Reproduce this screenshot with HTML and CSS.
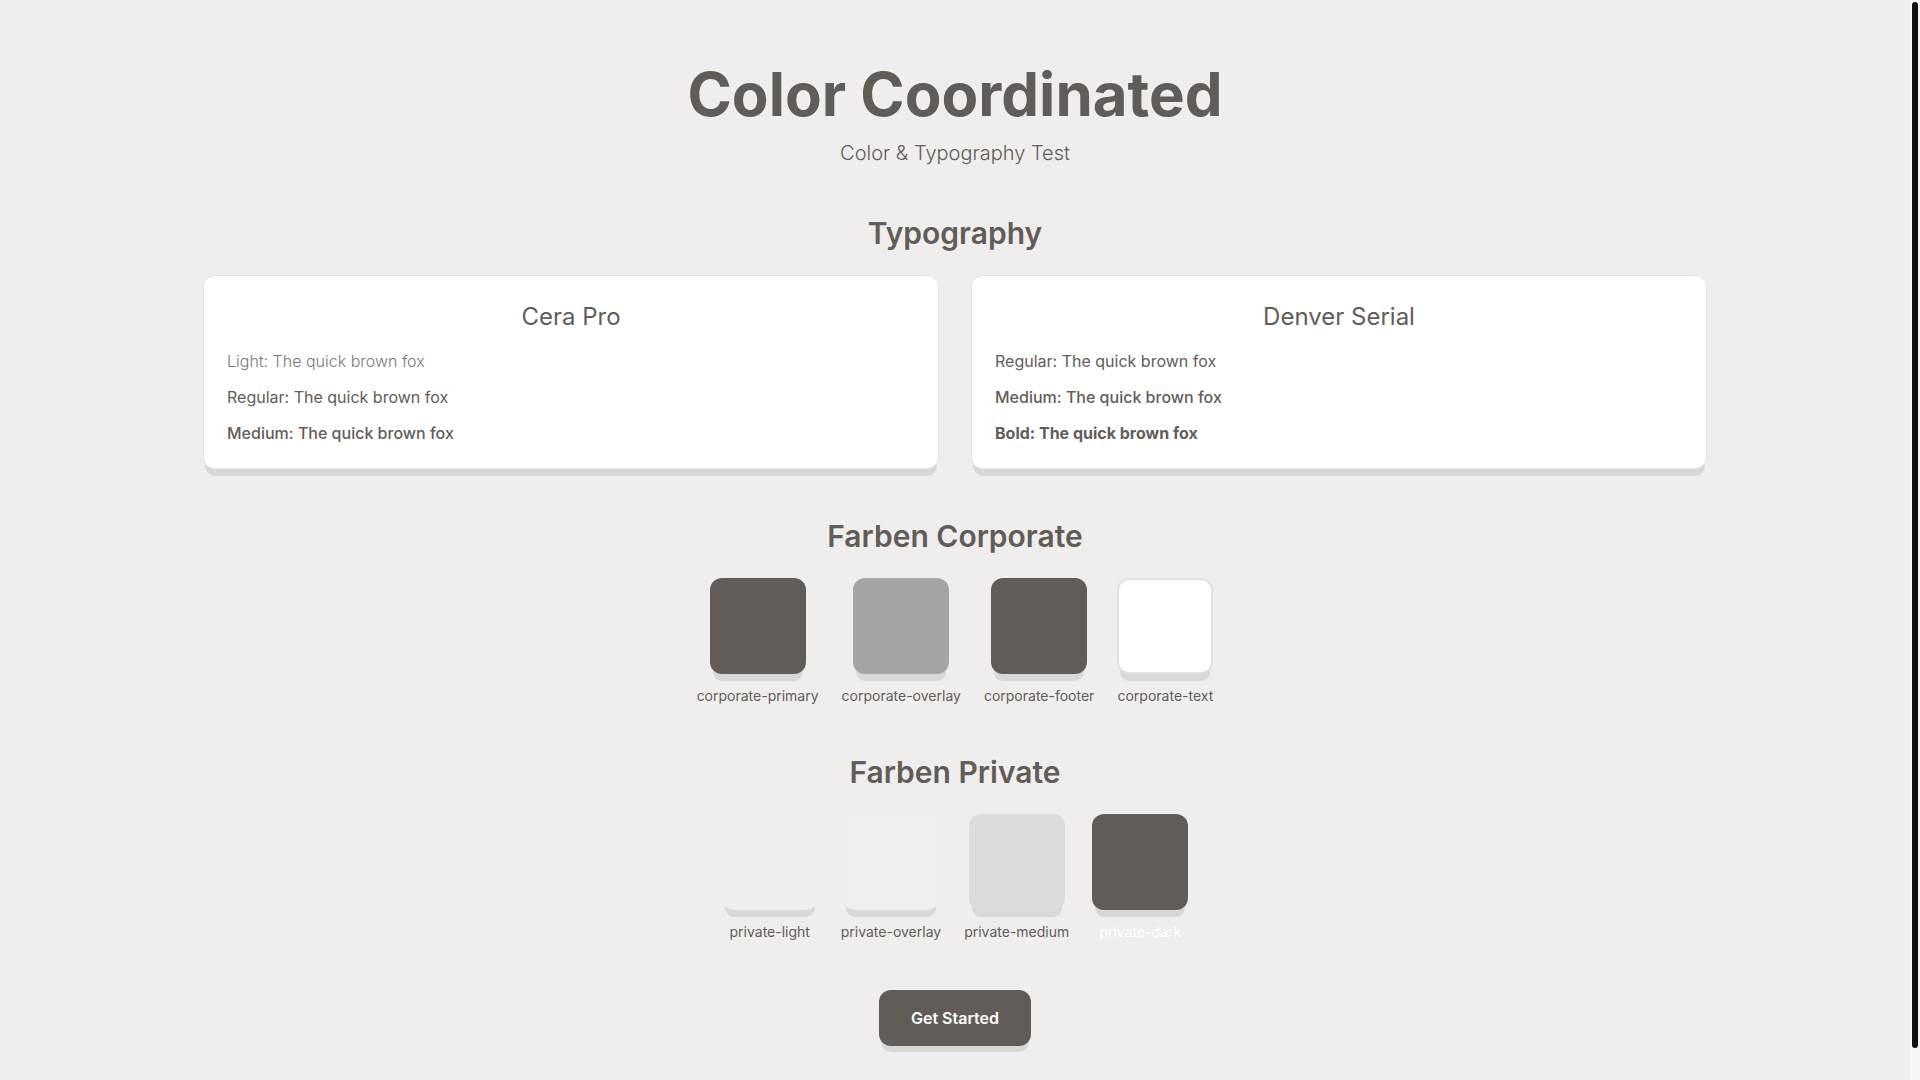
FILE: index.html
```html
<!DOCTYPE html>
<html lang="de">

<head>
    <meta charset="UTF-8" />
    <meta name="viewport" content="width=device-width, initial-scale=1.0" />
    <title>Color Coordinated</title>
    <link rel="stylesheet" href="styles.css">
</head>

<body>
    <main class="page">
        <header class="hero">
            <h1>Color Coordinated</h1>
            <p>Color &amp; Typography Test</p>
        </header>

        <section class="section">
            <h2>Typography</h2>
            <div class="font-grid">
                <div class="font-card">
                    <h3>Cera Pro</h3>
                    <p class="w-light">Light: The quick brown fox</p>
                    <p class="w-regular">Regular: The quick brown fox</p>
                    <p class="w-medium">Medium: The quick brown fox</p>
                </div>
                <div class="font-card">
                    <h3>Denver Serial</h3>
                    <p class="w-regular">Regular: The quick brown fox</p>
                    <p class="w-medium">Medium: The quick brown fox</p>
                    <p class="w-bold">Bold: The quick brown fox</p>
                </div>
            </div>
        </section>

        <section class="section section-colors">
            <h2>Farben Corporate</h2>
            <div class="swatches">
                <div class="swatch">
                    <div class="chip corporate-primary"></div>
                    <span>corporate-primary</span>
                </div>
                <div class="swatch">
                    <div class="chip corporate-overlay"></div>
                    <span>corporate-overlay</span>
                </div>
                <div class="swatch">
                    <div class="chip corporate-footer"></div>
                    <span>corporate-footer</span>
                </div>
                <div class="swatch">
                    <div class="chip corporate-text"></div>
                    <span>corporate-text</span>
                </div>
            </div>
        </section>

        <section class="section">
            <h2>Farben Private</h2>
            <div class="swatches">
                <div class="swatch">
                    <div class="chip private-light"></div>
                    <span>private-light</span>
                </div>
                <div class="swatch">
                    <div class="chip private-overlay"></div>
                    <span>private-overlay</span>
                </div>
                <div class="swatch">
                    <div class="chip private-medium"></div>
                    <span>private-medium</span>
                </div>
                <div class="swatch">
                    <div class="chip private-dark"></div>
                    <span class="label-light">private-dark</span>
                </div>
            </div>
        </section>

        <div class="cta">
            <button class="btn">Get Started</button>
        </div>
    </main>

    <!-- scroll indicator -->
    <div class="scrollbar">
        <div class="scrollbar-thumb"></div>
    </div>
</body>

</html>
```

FILE: styles.css
```css
* {
    padding: 0;
    margin: 0;
    box-sizing: border-box;
}

body {
    font-family: Inter, "Noto Sans", sans-serif;
    background-color: #efeeed;
    color: #625c59;
    padding-right: 10px;
}

.scrollbar {
    position: fixed;
    top: 0;
    right: 0;
    width: 10px;
    height: 100vh;
    background-color: #f7f7f7;
    padding: 2px 2px 32px;
}

.scrollbar-thumb {
    height: 100%;
    background-color: #111;
    border-radius: 3px;
}

.page {
    max-width: 1536px;
    margin: 0 auto;
    padding: 62px 16px 70px;
}

.hero {
    text-align: center;
}

.hero h1 {
    font-size: 60px;
    line-height: 64px;
    font-weight: 700;
}

.hero p {
    margin-top: 13px;
    font-size: 20px;
    line-height: 28px;
    font-weight: 300;
}

.section {
    margin-top: 48px;
}

.section-colors {
    margin-top: 49px;
}

.section h2 {
    text-align: center;
    font-size: 30px;
    line-height: 36px;
    font-weight: 600;
    margin-bottom: 24px;
}

.font-grid {
    display: grid;
    grid-template-columns: 1fr 1fr;
    gap: 32px;
}

.font-card {
    background-color: #fff;
    border: 1px solid #e6e5e3;
    border-radius: 12px;
    padding: 25px 23px 23px;
    box-shadow: 0 9px 0 -2px #d9d8d6;
}

.font-card h3 {
    text-align: center;
    font-size: 24px;
    line-height: 32px;
    font-weight: 400;
    margin-bottom: 16px;
}

.font-card p {
    font-size: 16px;
    line-height: 24px;
    margin-bottom: 12px;
}

.font-card p:last-child {
    margin-bottom: 0;
}

.w-light {
    font-weight: 300;
    color: #7d7774;
}

.w-regular {
    font-weight: 400;
}

.w-medium {
    font-weight: 500;
}

.w-bold {
    font-weight: 700;
}

.swatches {
    display: flex;
    justify-content: center;
    gap: 23px;
}

.swatch {
    display: flex;
    flex-direction: column;
    align-items: center;
    min-width: 96px;
}

.chip {
    width: 96px;
    height: 96px;
    border-radius: 12px;
    box-shadow: 0 10px 0 -3px #d9d8d6;
}

.swatch span {
    margin-top: 12px;
    font-size: 14px;
    line-height: 20px;
}

.label-light {
    color: #fff;
}

.corporate-primary,
.corporate-footer,
.private-dark {
    background-color: #625c59;
}

.corporate-overlay {
    background-color: #a7a3a0;
}

.corporate-text {
    background-color: #fff;
    border: 2px solid #e2e1df;
}

.private-light {
    background-color: #efeeed;
}

.private-overlay {
    background-color: #f0eeee;
}

.private-medium {
    background-color: #dddcdb;
}

.cta {
    margin-top: 48px;
    text-align: center;
}

.btn {
    font-family: Inter, "Noto Sans", sans-serif;
    font-size: 16px;
    line-height: 24px;
    font-weight: 600;
    color: #fff;
    background-color: #625c59;
    border: none;
    border-radius: 12px;
    padding: 16px 32px;
    box-shadow: 0 8px 0 -2px #d9d8d6;
    cursor: pointer;
}
```
